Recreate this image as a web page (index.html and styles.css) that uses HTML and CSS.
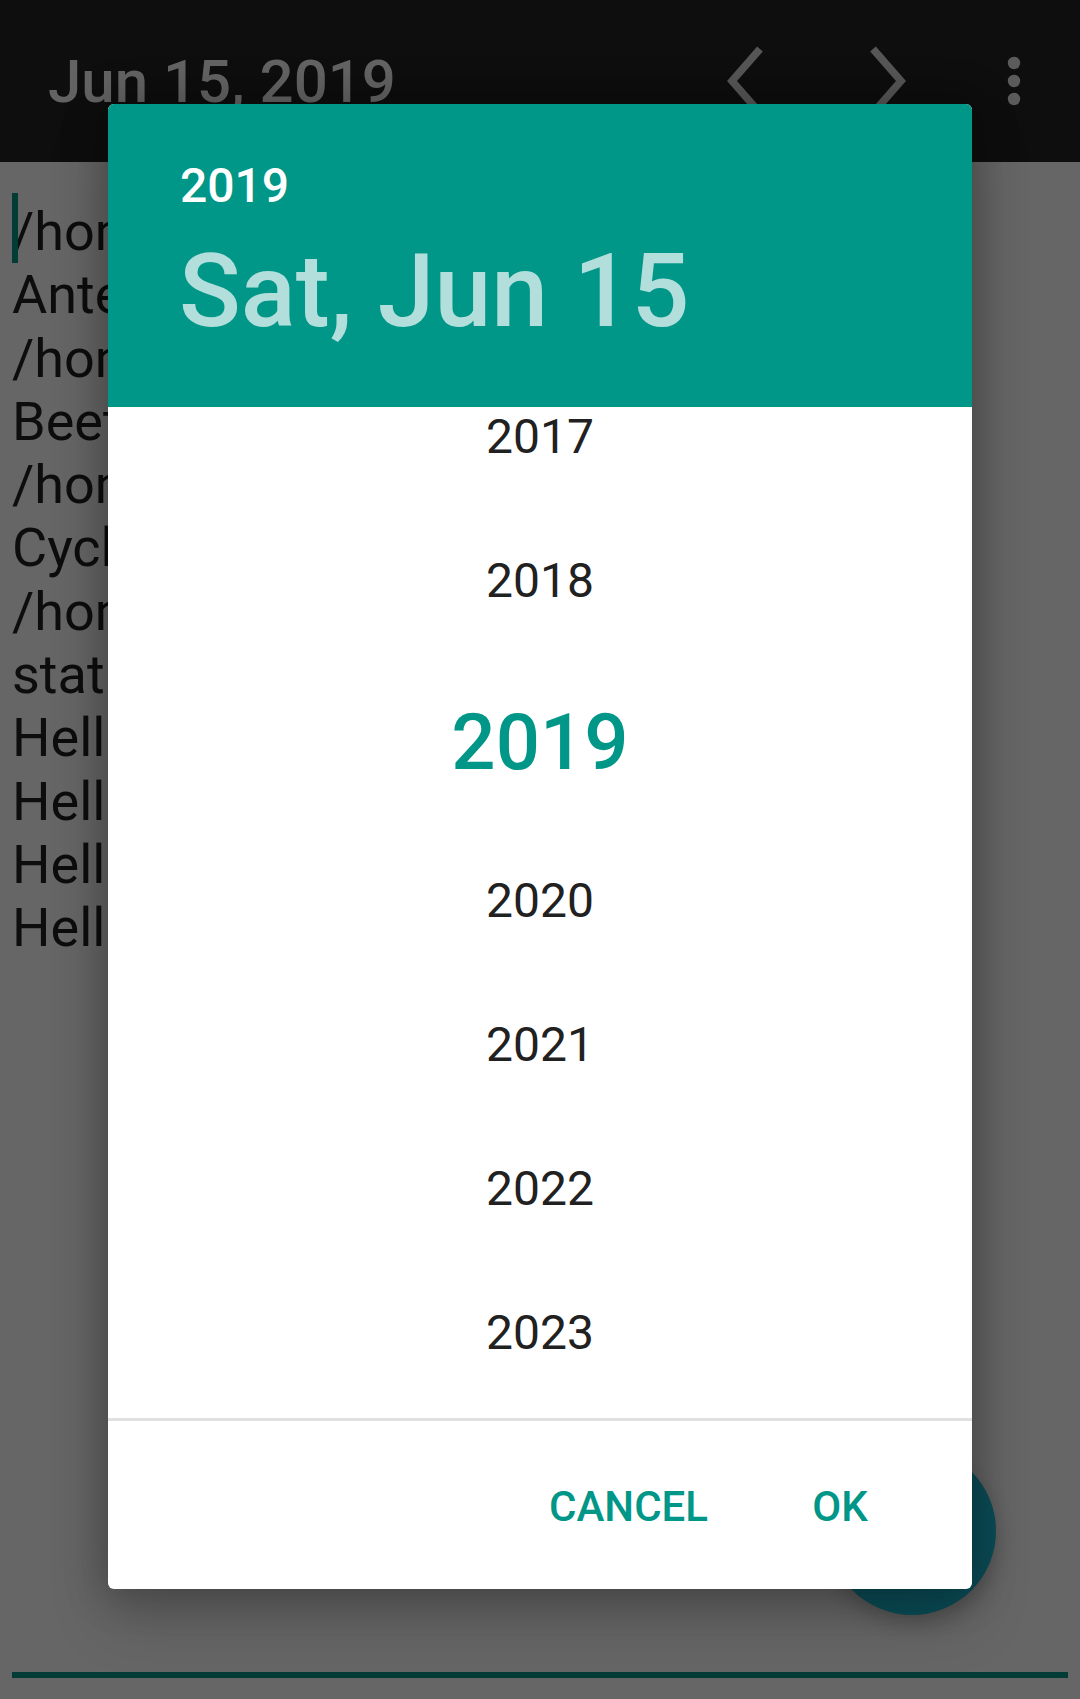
FILE: index.html
```html
<!DOCTYPE html>
<html lang="en">
<head>
<meta charset="utf-8">
<title>Date picker</title>
<link rel="stylesheet" href="styles.css">
</head>
<body>
<div class="app">
  <header class="toolbar">
    <div class="title">Jun 15, 2019</div>
    <div class="actions">
      <div class="action prev">
        <svg class="chev" viewBox="0 0 40 70" width="40" height="70"><polyline points="34,3 6,35 34,67" fill="none" stroke="#565656" stroke-width="7.5"/></svg>
      </div>
      <div class="action next">
        <svg class="chev" viewBox="0 0 40 70" width="40" height="70"><polyline points="6,3 34,35 6,67" fill="none" stroke="#565656" stroke-width="7.5"/></svg>
      </div>
      <div class="action overflow">
        <svg viewBox="0 0 16 52" width="16" height="52"><circle cx="8" cy="8" r="6.2" fill="#5b5b5b"/><circle cx="8" cy="26" r="6.2" fill="#5b5b5b"/><circle cx="8" cy="44" r="6.2" fill="#5b5b5b"/></svg>
      </div>
    </div>
  </header>
  <main class="editor">
    <span class="cursor"></span>
    <div class="lines">
      <div class="line">/home/user/notes/a.txt</div>
      <div class="line">Antelope grazing</div>
      <div class="line">/home/user/notes/b.txt</div>
      <div class="line">Beetles in the garden</div>
      <div class="line">/home/user/notes/c.txt</div>
      <div class="line">Cycling to work</div>
      <div class="line">/home/user/notes/d.txt</div>
      <div class="line">status: done</div>
      <div class="line">Hello world</div>
      <div class="line">Hello world</div>
      <div class="line">Hello world</div>
      <div class="line">Hello world</div>
    </div>
    <div class="underline"></div>
  </main>
  <div class="fab"></div>
  <div class="dialog">
    <div class="dlg-header">
      <div class="hdr-year">2019</div>
      <div class="hdr-date">Sat, Jun 15</div>
    </div>
    <div class="year-list">
      <div class="years">
        <div class="year">2017</div>
        <div class="year">2018</div>
        <div class="year selected">2019</div>
        <div class="year">2020</div>
        <div class="year">2021</div>
        <div class="year">2022</div>
        <div class="year">2023</div>
      </div>
    </div>
    <div class="divider"></div>
    <div class="buttons">
      <div class="btn">CANCEL</div>
      <div class="btn">OK</div>
    </div>
  </div>
</div>
</body>
</html>
```
FILE: styles.css
```css
html, body {
  margin: 0;
  padding: 0;
}
body {
  width: 1080px;
  height: 1699px;
  overflow: hidden;
  background: #666666;
  font-family: Roboto, "Noto Sans", "Liberation Sans", sans-serif;
}
.app {
  position: relative;
  width: 1080px;
  height: 1699px;
  display: flex;
  flex-direction: column;
}
.toolbar {
  height: 162px;
  flex: 0 0 162px;
  background: #0e0e0e;
  display: flex;
  align-items: center;
  padding-left: 48px;
  padding-right: 12px;
  box-sizing: border-box;
}
.title {
  flex: 1;
  color: #636363;
  font-size: 60px;
  font-weight: 500;
  line-height: 1;
  margin-top: 2px;
}
.actions {
  display: flex;
  align-items: center;
  height: 100%;
}
.action {
  width: 144px;
  height: 100%;
  display: flex;
  align-items: center;
  justify-content: center;
}
.action.prev {
  padding-left: 4px;
  box-sizing: border-box;
}
.action.next {
  padding-right: 2px;
  box-sizing: border-box;
}
.action.overflow {
  width: 108px;
}
.chev {
  display: block;
}
.editor {
  position: relative;
  flex: 1;
  display: flex;
  flex-direction: column;
  padding: 38px 12px 21px 12px;
}
.cursor {
  position: absolute;
  left: 12px;
  top: 31px;
  width: 6px;
  height: 70px;
  background: #033c37;
}
.lines {
  flex: 1;
  width: 96px;
  overflow: hidden;
}
.line {
  font-size: 54px;
  line-height: 63.3px;
  color: #0d0d0d;
  white-space: nowrap;
}
.underline {
  height: 6px;
  background: #033c37;
}
.fab {
  position: absolute;
  left: 828px;
  top: 1447px;
  width: 168px;
  height: 168px;
  border-radius: 50%;
  background: #0b4d57;
  box-shadow: 0 8px 20px rgba(0, 0, 0, 0.2);
}
.dialog {
  position: absolute;
  left: 108px;
  top: 104px;
  width: 864px;
  height: 1485px;
  border-radius: 6px;
  overflow: hidden;
  background: #ffffff;
  display: flex;
  flex-direction: column;
  box-shadow: 0 0 40px 6px rgba(0, 0, 0, 0.22), 0 30px 60px rgba(0, 0, 0, 0.18);
}
.dlg-header {
  flex: 0 0 303px;
  height: 303px;
  box-sizing: border-box;
  background: #009688;
  padding: 52px 0 0 72px;
}
.hdr-year {
  color: #ffffff;
  font-size: 48px;
  font-weight: 500;
  line-height: 60px;
  height: 60px;
}
.hdr-date {
  margin-top: 15px;
  margin-left: -1px;
  color: #b2dfdb;
  font-size: 102px;
  font-weight: 500;
  line-height: 120px;
  height: 120px;
  white-space: nowrap;
}
.year-list {
  flex: 1;
  overflow: hidden;
}
.years {
  margin-top: -42px;
}
.year {
  height: 144px;
  line-height: 144px;
  text-align: center;
  font-size: 48px;
  color: #212121;
}
.year.selected {
  height: 176px;
  box-sizing: border-box;
  padding-top: 4px;
  line-height: 172px;
  font-size: 78px;
  font-weight: 500;
  color: #009688;
}
.divider {
  flex: 0 0 3px;
  height: 3px;
  background: #e0e0e0;
}
.buttons {
  flex: 0 0 168px;
  height: 168px;
  display: flex;
  align-items: center;
  justify-content: flex-end;
  padding-right: 36px;
  gap: 12px;
}
.btn {
  min-width: 192px;
  box-sizing: border-box;
  padding: 0 24px;
  margin-top: 4px;
  text-align: center;
  color: #009688;
  font-size: 42px;
  font-weight: 500;
  line-height: 108px;
}
```
